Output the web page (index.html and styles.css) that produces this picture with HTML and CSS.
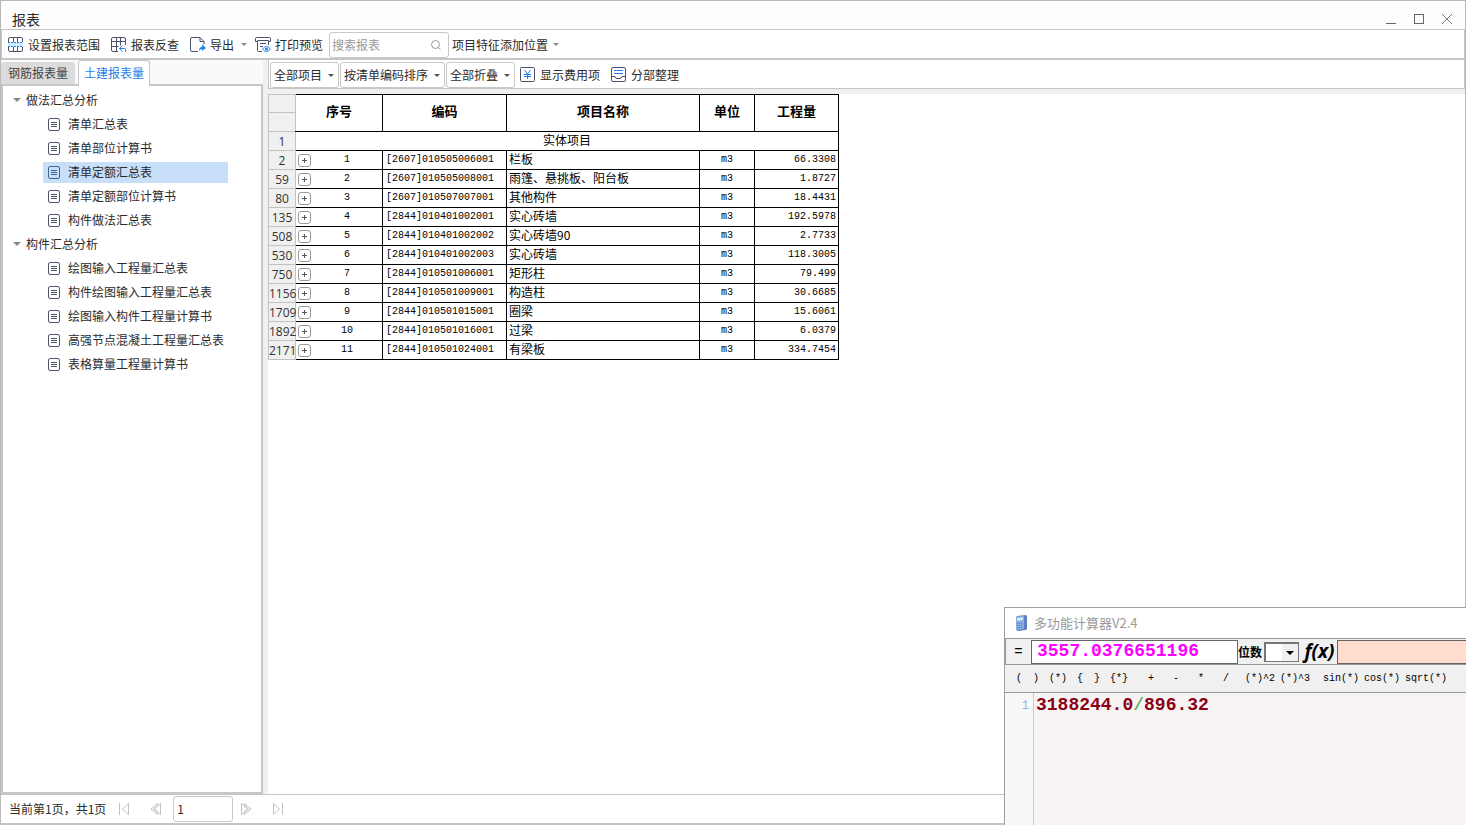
FILE: index.html
```html
<!DOCTYPE html>
<html lang="zh-CN">
<head>
<meta charset="utf-8">
<title>报表</title>
<link rel="stylesheet" href="styles.css">
</head>
<body>
<svg class="defs" aria-hidden="true">
  <symbol id="doc" viewBox="0 0 12 13"><rect x=".5" y=".5" width="11" height="12" rx="1.5" fill="none" stroke="currentColor"/><path d="M3 4.5h6M3 6.5h6M3 8.5h6" stroke="currentColor"/></symbol>
</svg>
<div class="window">
  <header class="titlebar">
    <h1 class="title">报表</h1>
    <div class="controls">
      <button class="ctl" aria-label="最小化"><svg width="12" height="12"><path d="M1 10.5h10" stroke="#666"/></svg></button>
      <button class="ctl" aria-label="最大化"><svg width="12" height="12"><rect x="1.5" y="1.5" width="9" height="9" fill="none" stroke="#666"/></svg></button>
      <button class="ctl" aria-label="关闭"><svg width="12" height="12"><path d="M1 1l10 10M11 1L1 11" stroke="#777" fill="none"/></svg></button>
    </div>
  </header>

  <div class="toolbar">
    <button class="tool"><svg width="16" height="16" fill="none"><path d="M.5 5V2Q.5.5 2 .5h11q1.5 0 1.5 1.500v3M.5 10v3q0 1.500 1.500 1.500h11q1.500 0 1.500-1.500v-3M5.500 1v4M9.500 1v4M5.500 10v4M9.500 10v4" stroke="#4a5168"/><path d="M0 5h15v5H0z" fill="#d5e8fc"/><path d="M0 5.500h15M0 9.500h15" stroke="#1f80ea" stroke-dasharray="2 1"/></svg>设置报表范围</button>
    <button class="tool"><svg width="16" height="16" fill="none"><path d="M14.500 8V2q0-1.500-1.500-1.500H2Q.5.500.5 2v11q0 1.500 1.500 1.500h5M.5 4.500h14M.5 9.500h7M5.500.500v14M9.500.500v8" stroke="#4a5168"/><path d="M8.500 11.500h5q1 0 1 1V15M11.500 8.500l-3 3 3 3" stroke="#1f80ea"/></svg>报表反查</button>
    <button class="tool"><svg width="16" height="16" fill="none"><path d="M8 14.500H2q-1.500 0-1.500-1.500V2Q.5.500 2 .5h8l4 4v3M10 .5v4h4" stroke="#4a5168"/><path d="M9 14q0-4 3-4V7.500l4 3.500-4 3v-2q-2 0-3 2z" fill="#1f80ea"/></svg>导出<i class="caret"></i></button>
    <button class="tool print"><svg width="16" height="16" fill="none"><path d="M2 4.500H.5v-3q0-1 1-1h13q1 0 1 1v3H14M2.500 3.500h11V8M2.500 3.500v10q0 1 1 1H7M5 6.500h6M5 9.500h3" stroke="#4a5168"/><path d="M7.500 12Q11.500 7 15.500 12 11.500 17 7.500 12z" stroke="#1f80ea"/><circle cx="11.500" cy="12" r="1.500" fill="#1f80ea"/></svg>打印预览</button>
    <label class="search"><input type="text" placeholder="搜索报表" aria-label="搜索报表"><svg width="12" height="12" fill="none" stroke="#999"><circle cx="5.500" cy="5.500" r="4"/><path d="M8.500 8.500l2 2"/></svg></label>
    <button class="tool feature">项目特征添加位置<i class="caret"></i></button>
  </div>

  <main class="main">
    <aside class="side">
      <div class="tabs">
        <button class="tab">钢筋报表量</button>
        <button class="tab active">土建报表量</button>
      </div>
      <nav class="tree">
        <div class="group">做法汇总分析</div>
        <ul>
          <li><a href="#"><svg class="doc"><use href="#doc"/></svg>清单汇总表</a></li>
          <li><a href="#"><svg class="doc"><use href="#doc"/></svg>清单部位计算书</a></li>
          <li><a href="#" class="selected"><svg class="doc"><use href="#doc"/></svg>清单定额汇总表</a></li>
          <li><a href="#"><svg class="doc"><use href="#doc"/></svg>清单定额部位计算书</a></li>
          <li><a href="#"><svg class="doc"><use href="#doc"/></svg>构件做法汇总表</a></li>
        </ul>
        <div class="group">构件汇总分析</div>
        <ul>
          <li><a href="#"><svg class="doc"><use href="#doc"/></svg>绘图输入工程量汇总表</a></li>
          <li><a href="#"><svg class="doc"><use href="#doc"/></svg>构件绘图输入工程量汇总表</a></li>
          <li><a href="#"><svg class="doc"><use href="#doc"/></svg>绘图输入构件工程量计算书</a></li>
          <li><a href="#"><svg class="doc"><use href="#doc"/></svg>高强节点混凝土工程量汇总表</a></li>
          <li><a href="#"><svg class="doc"><use href="#doc"/></svg>表格算量工程量计算书</a></li>
        </ul>
      </nav>
    </aside>

    <section class="content">
      <div class="filters">
        <label class="drop"><select aria-label="项目"><option>全部项目</option></select></label>
        <label class="drop"><select aria-label="排序"><option>按清单编码排序</option></select></label>
        <label class="drop"><select aria-label="折叠"><option>全部折叠</option></select></label>
        <button class="tool fee"><svg width="16" height="16" fill="none"><rect x=".5" y=".5" width="14" height="14" rx="1" stroke="#4a5168"/><path d="M4.500 3l3 4 3-4M4 7.500h7M4 9.500h7M7.500 7v5" stroke="#1f80ea"/></svg>显示费用项</button>
        <button class="tool"><svg width="16" height="16" fill="none"><rect x=".5" y=".5" width="14" height="14" rx="1.500" stroke="#4a5168"/><path d="M3 3.500h9M3 6.500h9" stroke="#1f80ea"/><path d="M.5 9.500H4q.500 2 2 2h3q1.500 0 2-2h3.500" stroke="#4a5168"/></svg>分部整理</button>
      </div>
      <div class="report">
        <table class="sheet">
          <colgroup><col class="c-line"><col class="c-no"><col class="c-code"><col class="c-name"><col class="c-unit"><col class="c-qty"></colgroup>
          <thead>
            <tr><td class="line"></td><th rowspan="2" class="first">序号</th><th rowspan="2">编码</th><th rowspan="2">项目名称</th><th rowspan="2">单位</th><th rowspan="2">工程量</th></tr>
            <tr><td class="line"></td></tr>
          </thead>
          <tbody>
            <tr><td class="line">1</td><td colspan="5" class="section">实体项目</td></tr>
            <tr><td class="line">2</td><td class="no"><div><button class="plus" aria-label="展开"></button><span>1</span></div></td><td class="code">[2607]010505006001</td><td>栏板</td><td class="unit">m3</td><td class="qty">66.3308</td></tr>
            <tr><td class="line">59</td><td class="no"><div><button class="plus" aria-label="展开"></button><span>2</span></div></td><td class="code">[2607]010505008001</td><td>雨篷、悬挑板、阳台板</td><td class="unit">m3</td><td class="qty">1.8727</td></tr>
            <tr><td class="line">80</td><td class="no"><div><button class="plus" aria-label="展开"></button><span>3</span></div></td><td class="code">[2607]010507007001</td><td>其他构件</td><td class="unit">m3</td><td class="qty">18.4431</td></tr>
            <tr><td class="line">135</td><td class="no"><div><button class="plus" aria-label="展开"></button><span>4</span></div></td><td class="code">[2844]010401002001</td><td>实心砖墙</td><td class="unit">m3</td><td class="qty">192.5978</td></tr>
            <tr><td class="line">508</td><td class="no"><div><button class="plus" aria-label="展开"></button><span>5</span></div></td><td class="code">[2844]010401002002</td><td>实心砖墙90</td><td class="unit">m3</td><td class="qty">2.7733</td></tr>
            <tr><td class="line">530</td><td class="no"><div><button class="plus" aria-label="展开"></button><span>6</span></div></td><td class="code">[2844]010401002003</td><td>实心砖墙</td><td class="unit">m3</td><td class="qty">118.3005</td></tr>
            <tr><td class="line">750</td><td class="no"><div><button class="plus" aria-label="展开"></button><span>7</span></div></td><td class="code">[2844]010501006001</td><td>矩形柱</td><td class="unit">m3</td><td class="qty">79.499</td></tr>
            <tr><td class="line">1156</td><td class="no"><div><button class="plus" aria-label="展开"></button><span>8</span></div></td><td class="code">[2844]010501009001</td><td>构造柱</td><td class="unit">m3</td><td class="qty">30.6685</td></tr>
            <tr><td class="line">1709</td><td class="no"><div><button class="plus" aria-label="展开"></button><span>9</span></div></td><td class="code">[2844]010501015001</td><td>圈梁</td><td class="unit">m3</td><td class="qty">15.6061</td></tr>
            <tr><td class="line">1892</td><td class="no"><div><button class="plus" aria-label="展开"></button><span>10</span></div></td><td class="code">[2844]010501016001</td><td>过梁</td><td class="unit">m3</td><td class="qty">6.0379</td></tr>
            <tr><td class="line">2171</td><td class="no"><div><button class="plus" aria-label="展开"></button><span>11</span></div></td><td class="code">[2844]010501024001</td><td>有梁板</td><td class="unit">m3</td><td class="qty">334.7454</td></tr>
          </tbody>
        </table>
      </div>
    </section>
  </main>

  <footer class="pager">
    <span>当前第1页，共1页</span>
    <button class="page" aria-label="首页"><svg width="12" height="14"><path d="M1.500 1v12M10.500 1.500v11L4.500 7z"/></svg></button>
    <button class="page" aria-label="上一页"><svg width="12" height="14"><path d="M7.500 1.500v2L3.500 7l4 3.500v2L1 7zM10.500 1.500v11L4.500 7z"/></svg></button>
    <input class="pageno" type="text" value="1" aria-label="页码">
    <button class="page" aria-label="下一页"><svg width="12" height="14"><path d="M4.500 1.500v2L8.500 7l-4 3.500v2L11 7zM1.500 1.500v11L7.500 7z"/></svg></button>
    <button class="page" aria-label="末页"><svg width="12" height="14"><path d="M10.500 1v12M1.500 1.500v11L7.500 7z"/></svg></button>
  </footer>
</div>

<section class="calc" aria-label="多功能计算器">
  <div class="calc-title"><svg width="12" height="16"><path d="M2 1l9-1 1 1v13l-1 1-8 1-2-1z" fill="#5b7fc0"/><path d="M1 1.500L9 1v13l-8 1z" fill="#86acdf"/><path d="M2 3l6-1v3l-6 1z" fill="#d3e7f8"/><path d="M2 8.500h6M2 10.500h6M2 12.500h6" stroke="#4f7fca" stroke-dasharray="1 1"/></svg>多功能计算器V2.4</div>
  <div class="calc-row">
    <button class="equals">=</button>
    <input class="result" type="text" value="3557.0376651196" aria-label="结果">
    <label class="digits">位数<span class="combo"><select><option></option></select></span></label>
    <button class="fx">f(x)</button>
    <input class="formula" type="text" aria-label="公式">
  </div>
  <div class="calc-ops">
    <button>(</button><button>)</button><button>(*)</button><button>{</button><button>}</button><button>{*}</button><button class="op lead">+</button><button class="op">-</button><button class="op">*</button><button class="op">/</button><button class="fn power">(*)^2</button><button class="fn">(*)^3</button><button class="fn trig">sin(*)</button><button class="fn">cos(*)</button><button class="fn">sqrt(*)</button>
  </div>
  <div class="editor">
    <div class="gutter">1</div>
    <code class="expr">3188244.0<span>/</span>896.32</code>
  </div>
</section>
</body>
</html>
```
FILE: styles.css
```css
* { box-sizing: border-box; }
body {
  margin: 0;
  height: 100vh;
  overflow: hidden;
  font: 12px/16px "Noto Sans CJK SC", sans-serif;
  color: #2b2b2b;
}
button, input, select { font: inherit; color: inherit; }
button { margin: 0; padding: 0; border: 0; background: none; }
.defs { display: none; }

.window {
  height: 100%;
  display: flex;
  flex-direction: column;
  border: 1px solid #b9b9b9;
  border-bottom: 2px solid #c4c4c8;
  background: #fff;
}
.titlebar {
  height: 28px;
  display: flex;
  justify-content: space-between;
  align-items: center;
  padding: 8px 12px 0 11px;
  background: #fdfdfd;
}
.title { margin: 0; font-size: 14px; font-weight: 400; }
.controls { display: flex; gap: 16px; }
.ctl { width: 12px; height: 12px; display: block; }
.ctl svg { display: block; }

.toolbar {
  height: 31px;
  display: flex;
  align-items: center;
  padding: 1px 6px 0;
  border: 1px solid #c4c6ca;
  border-bottom-width: 2px;
}
.tool { display: flex; align-items: center; gap: 4px; margin-right: 11px; white-space: nowrap; }
.tool svg { flex: none; }
.caret {
  border: 3px solid transparent;
  border-top-color: #8a8a8a;
  border-bottom: 0;
}
.tool .caret { margin-left: 3px; }
.tool.print { margin: 0 6px 0 -3px; }
.tool.feature { margin: 0; gap: 2px; }
.search {
  width: 120px;
  height: 26px;
  display: flex;
  align-items: center;
  margin-right: 3px;
  padding: 0 6px 0 2px;
  border: 1px solid #c8c8c8;
  border-radius: 3px;
}
.search input { flex: 1; min-width: 0; padding: 0; border: 0; outline: 0; }
.search input::placeholder { color: #999; opacity: 1; }

.main { flex: 1; min-height: 0; display: flex; background: #f0f0f0; }
.side { width: 262px; display: flex; flex-direction: column; background: #fafafa; }
.tabs { height: 24px; display: flex; align-items: flex-end; gap: 3px; }
.tab {
  width: 74px;
  height: 22px;
  background: #dcdcdc;
  border-radius: 3px 3px 0 0;
  color: #444;
}
.tab.active {
  width: 72px;
  height: 26px;
  margin-bottom: -2px;
  padding-bottom: 2px;
  background: #fff;
  border: 1px solid #c4c6ca;
  border-bottom: 0;
  color: #1f80ea;
  z-index: 1;
}
.tree { flex: 1; padding: 2px 0; border: 2px solid #c6c7cb; background: #fff; }
.tree ul { margin: 0; padding: 0 33px 0 40px; list-style: none; }
.group { height: 24px; display: flex; align-items: center; gap: 5px; padding-left: 10px; }
.group::before { content: ""; border: 4px solid transparent; border-top-color: #888; border-bottom: 0; }
.tree li { height: 24px; padding: 2px 0 1px; }
.tree a {
  height: 21px;
  display: flex;
  align-items: center;
  gap: 8px;
  padding: 0 0 1px 5px;
  color: inherit;
  text-decoration: none;
  white-space: nowrap;
}
.tree a.selected { background: #c8dff9; }
.tree a.selected .doc { color: #3f6698; }
.doc { width: 12px; height: 13px; flex: none; color: #4f566c; }

.content { flex: 1; min-width: 0; display: flex; flex-direction: column; padding-left: 5px; }
.filters {
  height: 29px;
  display: flex;
  align-items: center;
  padding: 1px 0 0 1px;
  border: 1px solid #c4c6ca;
  border-top: 0;
  background: #fff;
}
.drop { position: relative; display: block; margin-right: 1px; }
.drop select {
  display: block;
  height: 26px;
  padding: 0 15px 0 3px;
  border: 1px solid #c8c8c8;
  border-radius: 3px;
  background: #fff;
  appearance: none;
}
.drop::after {
  content: "";
  position: absolute;
  right: 5px;
  top: 12px;
  border: 3px solid transparent;
  border-top-color: #555;
  border-bottom: 0;
  pointer-events: none;
}
.fee { margin-left: 4px; }
.report { flex: 1; margin-top: 5px; background: #fff; }

.sheet { width: 571px; table-layout: fixed; border-collapse: collapse; color: #000; }
.c-line { width: 27px; }
.c-no { width: 87px; }
.c-code { width: 124px; }
.c-name { width: 193px; }
.c-unit { width: 55px; }
.c-qty { width: 84px; }
.sheet tr { height: 19px; }
.sheet thead tr:first-child { height: 18px; }
.sheet td, .sheet th {
  padding: 0 2px 2px;
  border: 1px solid #000;
  line-height: 16px;
  white-space: nowrap;
}
.sheet th { padding-bottom: 5px; font-size: 13px; font-weight: 700; }
.sheet th.first { border-left-color: #c2c2c2; }
.sheet .line {
  padding: 1px 0 0;
  border-color: #c2c2c2;
  background: #f0f0f0;
  color: #333;
  font-family: "Open Sans", sans-serif;
  text-align: center;
}
.sheet .section { text-align: center; }
.sheet .code, .sheet .unit, .sheet .qty, .sheet .no {
  padding-bottom: 0;
  font-family: "Liberation Mono", monospace;
  font-size: 10px;
}
.sheet .code { padding-left: 3px; }
.sheet .unit { text-align: center; }
.sheet .qty { text-align: right; }
.no div { display: flex; align-items: center; }
.no span { flex: 1; padding-left: 3px; text-align: center; }
.plus {
  width: 13px;
  height: 13px;
  border: 1px solid #999;
  border-radius: 3px;
  background:
    linear-gradient(#555, #555) center / 5px 1px no-repeat,
    linear-gradient(#555, #555) center / 1px 5px no-repeat;
}

.pager {
  height: 29px;
  display: flex;
  align-items: center;
  padding-left: 8px;
  border-top: 1px solid #c4c6ca;
}
.page { width: 12px; height: 14px; margin: 0 8px 0 12px; }
.page + .page { margin-right: 11px; }
.page svg { display: block; fill: none; stroke: #c2c2c2; }
.pageno { width: 60px; height: 26px; margin-right: -5px; padding: 0 3px 2px; border: 1px solid #c8c8c8; border-radius: 3px; }

.calc {
  position: absolute;
  right: 0;
  bottom: 0;
  width: 462px;
  height: 218px;
  display: flex;
  flex-direction: column;
  border: 1px solid #a0a0a0;
  border-width: 1px 0 0 1px;
  background: #f0f0f0;
  color: #000;
}
.calc-title {
  height: 30px;
  display: flex;
  align-items: center;
  gap: 7px;
  padding-left: 10px;
  background: #fff;
  color: #999;
  font-size: 13px;
}
.calc-row {
  height: 27px;
  display: flex;
  align-items: center;
  border: 1px solid #999;
  border-right: 0;
}
.equals { width: 25px; font: 14px "Liberation Mono", monospace; }
.result, .formula { height: 24px; border: 1px solid #666; border-radius: 0; outline: 0; }
.result {
  width: 207px;
  padding: 0 5px 2px;
  background: #fff;
  color: #f0f;
  font: bold 18px "Liberation Mono", monospace;
}
.formula { flex: 1; min-width: 0; border-right: 0; background: #ffdccc; }
.digits { display: flex; align-items: center; font-weight: 700; }
.combo { position: relative; display: block; margin-left: 2px; }
.combo select {
  display: block;
  width: 35px;
  height: 20px;
  border: 1px solid #777;
  border-width: 2px 1px 1px 2px;
  border-radius: 0;
  background: linear-gradient(#f0f0f0, #f0f0f0) right / 16px 100% no-repeat #fff;
  appearance: none;
}
.combo::after {
  content: "";
  position: absolute;
  right: 5px;
  top: 9px;
  border: 4px solid transparent;
  border-top-color: #000;
  border-bottom: 0;
  pointer-events: none;
}
.fx { width: 38px; padding: 0 0 2px 3px; font: italic bold 19px "Open Sans", sans-serif; }
.calc-ops {
  height: 28px;
  display: flex;
  align-items: center;
  gap: 9px;
  padding-left: 10px;
  border-bottom: 1px solid #999;
}
.calc-ops button { min-width: 8px; font: 10px/16px "Liberation Mono", monospace; white-space: nowrap; }
.calc-ops .op { width: 16px; }
.calc-ops .lead { margin-left: 6px; }
.calc-ops .fn { margin: 0 -2px; }
.calc-ops .power { margin-left: 2px; }
.calc-ops .trig { margin-left: 6px; }
.editor { flex: 1; display: flex; background: #f8f4f4; }
.gutter {
  width: 29px;
  padding: 5px 4px;
  border-right: 1px solid #ccc;
  background: #f8f8f8;
  color: #8fb4e8;
  font: 12px/16px "Liberation Mono", monospace;
  text-align: right;
}
.expr { padding: 1px 2px; color: #8b0015; font: bold 18px/22px "Liberation Mono", monospace; }
.expr span { color: #4ca64c; font-weight: 400; }
```
